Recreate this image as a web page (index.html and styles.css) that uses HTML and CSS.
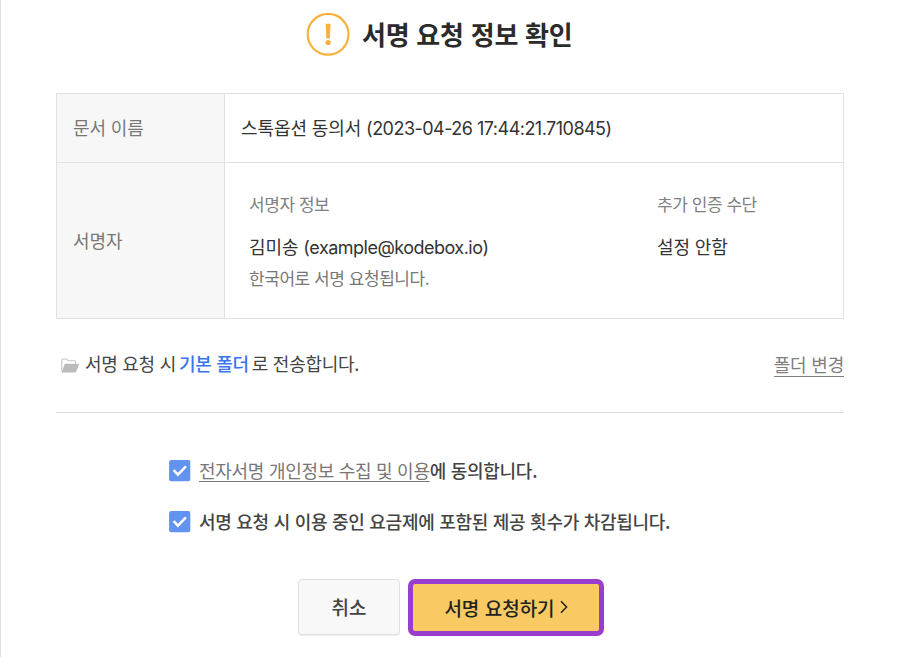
FILE: index.html
```html
<!DOCTYPE html>
<html lang="ko">
<head>
    <meta charset="UTF-8">
    <meta name="viewport" content="width=device-width, initial-scale=1.0">
    <title>서명 요청 정보 확인</title>
    <link rel="stylesheet" href="styles.css">
</head>
<body>
    <main class="confirm">
        <header class="title">
            <svg class="title-icon" width="44" height="44" viewBox="0 0 44 44">
                <circle cx="22.1" cy="22.3" r="20.4" fill="none" stroke="#f6b33c" stroke-width="2.2"/>
                <path d="M19.7 11.8h4.8l-.6 14.7h-3.6z" fill="#f6b33c"/>
                <circle cx="22.1" cy="30.5" r="2.6" fill="#f6b33c"/>
            </svg>
            <h1>서명 요청 정보 확인</h1>
        </header>

        <section class="info">
            <div class="label">문서 이름</div>
            <div class="value"><p>스톡옵션 동의서 <span class="latin">(2023-04-26 17:44:21.710845)</span></p></div>
            <div class="label signer-label">서명자</div>
            <div class="signer">
                <div class="signer-info">
                    <p class="caption">서명자 정보</p>
                    <p class="name">김미송 <span class="latin">(example@kodebox.io)</span></p>
                    <p class="note">한국어로 서명 요청됩니다.</p>
                </div>
                <div class="signer-auth">
                    <p class="caption">추가 인증 수단</p>
                    <p class="name">설정 안함</p>
                </div>
            </div>
        </section>

        <section class="folder">
            <svg class="folder-icon" width="18" height="16" viewBox="0 0 18 16">
                <path d="M.8 13.5V2q0-1 1-1h3.8l1.8 1.8h6.2q1 0 1 1v2" fill="none" stroke="#c4c4c4" stroke-width="1.1"/>
                <path d="M4.6 5.8h12.7q.9 0 .6.9l-2.7 7q-.3.8-1.2.8H1.6q-.9 0-.6-.9l2.6-7q.3-.8 1-.8z" fill="#bbb"/>
            </svg>
            <p>서명 요청 시<b>기본 폴더</b>로 전송합니다.</p>
            <a class="change" href="#">폴더 변경</a>
        </section>

        <section class="agree">
            <label>
                <svg class="check" width="22" height="22" viewBox="0 0 22 22">
                    <rect x=".1" y=".1" width="21.2" height="21.2" rx="2" fill="#6293ee"/>
                    <path d="M4.6 10.2l4.3 4.4 8-8.2" fill="none" stroke="#fff" stroke-width="2.5"/>
                </svg>
                <span><a href="#">전자서명 개인정보 수집 및 이용</a>에 동의합니다.</span>
            </label>
            <label>
                <svg class="check" width="22" height="22" viewBox="0 0 22 22">
                    <rect x=".1" y=".1" width="21.2" height="21.2" rx="2" fill="#6293ee"/>
                    <path d="M4.6 10.2l4.3 4.4 8-8.2" fill="none" stroke="#fff" stroke-width="2.5"/>
                </svg>
                <span>서명 요청 시 이용 중인 요금제에 포함된 제공 횟수가 차감됩니다.</span>
            </label>
        </section>

        <div class="buttons">
            <button class="cancel" type="button">취소</button>
            <button class="submit" type="button">서명 요청하기
                <svg width="8" height="14" viewBox="0 0 8 14"><path d="M1 1.2l5.6 5.8L1 12.8" fill="none" stroke="#222" stroke-width="1.5"/></svg>
            </button>
        </div>
    </main>
</body>
</html>
```
FILE: styles.css
```css
* {
    box-sizing: border-box;
}
body {
    margin: 0;
    height: 657px;
    overflow: hidden;
    border-left: 1px solid #e2e2e2;
    background: #fff;
    font-family: "Noto Sans CJK KR", sans-serif;
    font-size: 18px;
    line-height: 26px;
    letter-spacing: -0.1px;
    color: #333;
}
h1, p {
    margin: 0;
}
.latin {
    font-family: Inter, sans-serif;
    letter-spacing: -0.52px;
}
.confirm {
    width: 788px;
    margin-left: 55px;
}
.title {
    display: flex;
    align-items: center;
    gap: 12px;
    height: 93px;
    padding: 0 0 25px 250px;
}
.title h1 {
    font-size: 26px;
    line-height: 40px;
    font-weight: 700;
    letter-spacing: -0.25px;
    color: #2b2b2b;
}
.info {
    display: grid;
    grid-template-columns: 168px 1fr;
    grid-template-rows: 68px 156px;
    height: 226px;
    border: 1px solid #e2e2e2;
}
.label, .value {
    display: flex;
    align-items: center;
    padding: 0 0 2px 16px;
}
.value {
    padding-bottom: 0;
}
.label {
    background: #f7f7f7;
    border-right: 1px solid #e2e2e2;
    color: #777;
}
.signer-label, .signer {
    border-top: 1px solid #e2e2e2;
}
.signer {
    display: flex;
    padding: 28px 0 0 24px;
}
.signer-info {
    width: 408px;
}
.caption {
    font-size: 17px;
    letter-spacing: -0.45px;
    color: #808080;
}
.name {
    margin-top: 16px;
}
.note {
    margin-top: 4px;
    font-size: 17px;
    letter-spacing: -0.45px;
    color: #777;
}
.folder {
    display: flex;
    align-items: center;
    height: 94px;
    padding-left: 5px;
    border-bottom: 1px solid #ddd;
    color: #444;
}
.folder p {
    margin: 0 0 6px 6px;
    letter-spacing: -0.28px;
}
.folder b {
    margin: 0 3px;
    font-weight: 500;
    color: #3a74ee;
}
.change {
    margin: 0 0 1px auto;
    color: #808080;
    text-decoration: none;
    letter-spacing: -0.2px;
    border-bottom: 1px solid #808080;
    line-height: 23px;
}
.agree {
    display: grid;
    gap: 25px;
    padding: 45px 0 0 113px;
    color: #444;
    font-weight: 500;
    letter-spacing: -0.28px;
}
.agree label {
    display: flex;
    align-items: center;
    height: 26px;
}
.agree span {
    margin: 0 0 2px 8px;
}
.agree a {
    color: #777;
    font-weight: 400;
    text-decoration: underline 1px;
    text-underline-offset: 3px;
}
.buttons {
    display: flex;
    gap: 8px;
    padding: 44px 0 0 242px;
}
.buttons button {
    display: flex;
    align-items: center;
    justify-content: center;
    height: 57px;
    padding: 0 0 1px;
    font: 500 19px "Noto Sans CJK KR", sans-serif;
}
.buttons .cancel {
    width: 102px;
    height: 56px;
    border: 1px solid #e0e0e0;
    border-radius: 4px;
    background: #f8f8f8;
    box-shadow: 0 1px 1px #eee;
    color: #444;
}
.submit {
    width: 196px;
    gap: 5px;
    border: 5px solid #983dcd;
    border-radius: 7px;
    background: #f9ca63;
    color: #222;
}
```
